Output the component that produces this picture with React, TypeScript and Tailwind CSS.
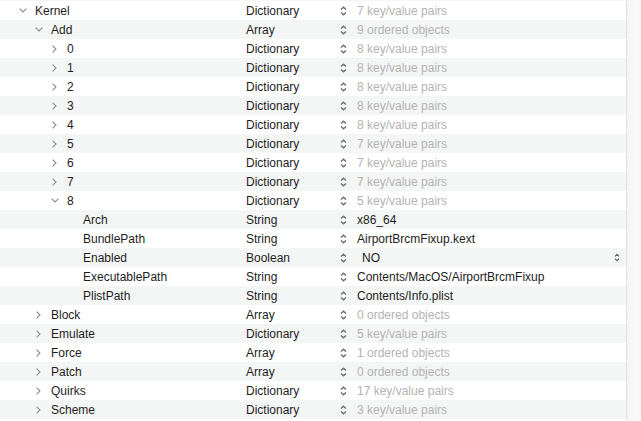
import React from "react";

type Row = {
  key: string;
  level: number;
  exp?: "open" | "closed";
  type: string;
  value: string;
  dim?: boolean;
  popup?: boolean;
};

const rows: Row[] = [
  { key: "Kernel", level: 0, exp: "open", type: "Dictionary", value: "7 key/value pairs", dim: true },
  { key: "Add", level: 1, exp: "open", type: "Array", value: "9 ordered objects", dim: true },
  { key: "0", level: 2, exp: "closed", type: "Dictionary", value: "8 key/value pairs", dim: true },
  { key: "1", level: 2, exp: "closed", type: "Dictionary", value: "8 key/value pairs", dim: true },
  { key: "2", level: 2, exp: "closed", type: "Dictionary", value: "8 key/value pairs", dim: true },
  { key: "3", level: 2, exp: "closed", type: "Dictionary", value: "8 key/value pairs", dim: true },
  { key: "4", level: 2, exp: "closed", type: "Dictionary", value: "8 key/value pairs", dim: true },
  { key: "5", level: 2, exp: "closed", type: "Dictionary", value: "7 key/value pairs", dim: true },
  { key: "6", level: 2, exp: "closed", type: "Dictionary", value: "7 key/value pairs", dim: true },
  { key: "7", level: 2, exp: "closed", type: "Dictionary", value: "7 key/value pairs", dim: true },
  { key: "8", level: 2, exp: "open", type: "Dictionary", value: "5 key/value pairs", dim: true },
  { key: "Arch", level: 3, type: "String", value: "x86_64" },
  { key: "BundlePath", level: 3, type: "String", value: "AirportBrcmFixup.kext" },
  { key: "Enabled", level: 3, type: "Boolean", value: "NO", popup: true },
  { key: "ExecutablePath", level: 3, type: "String", value: "Contents/MacOS/AirportBrcmFixup" },
  { key: "PlistPath", level: 3, type: "String", value: "Contents/Info.plist" },
  { key: "Block", level: 1, exp: "closed", type: "Array", value: "0 ordered objects", dim: true },
  { key: "Emulate", level: 1, exp: "closed", type: "Dictionary", value: "5 key/value pairs", dim: true },
  { key: "Force", level: 1, exp: "closed", type: "Array", value: "1 ordered objects", dim: true },
  { key: "Patch", level: 1, exp: "closed", type: "Array", value: "0 ordered objects", dim: true },
  { key: "Quirks", level: 1, exp: "closed", type: "Dictionary", value: "17 key/value pairs", dim: true },
  { key: "Scheme", level: 1, exp: "closed", type: "Dictionary", value: "3 key/value pairs", dim: true },
];

const indent = ["pl-[15px]", "pl-[31px]", "pl-[47px]", "pl-[63px]"];

function Chevron({ exp }: { exp?: "open" | "closed" }) {
  if (exp === "open")
    return (
      <svg width="8" height="5" viewBox="0 0 8 5" className="block">
        <path d="M0.6 0.6 L4 4 L7.4 0.6" fill="none" stroke="#8c8c8c" strokeWidth="1.1" />
      </svg>
    );
  if (exp === "closed")
    return (
      <svg width="5" height="8" viewBox="0 0 5 8" className="block">
        <path d="M0.6 0.6 L4 4 L0.6 7.4" fill="none" stroke="#8c8c8c" strokeWidth="1.1" />
      </svg>
    );
  return null;
}

function Stepper() {
  return (
    <svg width="7" height="10" viewBox="0 0 7 10" className="block">
      <path d="M1 3.6 L3.5 1.2 L6 3.6" fill="none" stroke="#6e6e6e" strokeWidth="1.4" />
      <path d="M1 6.4 L3.5 8.8 L6 6.4" fill="none" stroke="#6e6e6e" strokeWidth="1.4" />
    </svg>
  );
}

function SmallStepper() {
  return (
    <svg width="6" height="9" viewBox="0 0 6 9" className="block">
      <path d="M1 3.3 L3 1.3 L5 3.3" fill="none" stroke="#666" strokeWidth="1.2" />
      <path d="M1 5.7 L3 7.7 L5 5.7" fill="none" stroke="#666" strokeWidth="1.2" />
    </svg>
  );
}

export default function App() {
  return (
    <div
      className="w-[641px] h-[421px] overflow-hidden flex bg-white text-[12px] text-[#1d1d1d]"
      style={{ fontFamily: '"Liberation Sans", Arial, sans-serif' }}
    >
      <div className="w-[626px] flex flex-col">
        <div className="h-[1px] bg-[#f4f5f5]" />
        {rows.map((r, i) => (
          <div
            key={i}
            className={`h-[19px] flex items-center ${i % 2 === 1 ? "bg-[#f4f5f5]" : "bg-white"}`}
          >
            <div className={`w-[246px] flex items-center ${indent[r.level]}`}>
              <div className="w-[15px] flex justify-center items-center">
                <Chevron exp={r.exp} />
              </div>
              <span className="ml-[5px] leading-none pt-[1px]">{r.key}</span>
            </div>
            <div className="w-[94px] leading-none pt-[1px]">{r.type}</div>
            <div className="flex items-center">
              <Stepper />
            </div>
            <div
              className={`ml-[10px] flex-1 flex items-center leading-none ${r.dim ? "text-[#b3b3b3]" : "text-[#1d1d1d]"}`}
            >
              <span className={`pt-[1px] ${r.popup ? "ml-[5px]" : ""}`}>{r.value}</span>
              {r.popup && (
                <div className="ml-auto mr-[6px]">
                  <SmallStepper />
                </div>
              )}
            </div>
          </div>
        ))}
      </div>
      <div className="w-[15px] border-l border-[#e3e3e3] bg-gradient-to-r from-[#f3f3f3] via-[#f9f9f9] to-[#f5f5f5]" />
    </div>
  );
}
